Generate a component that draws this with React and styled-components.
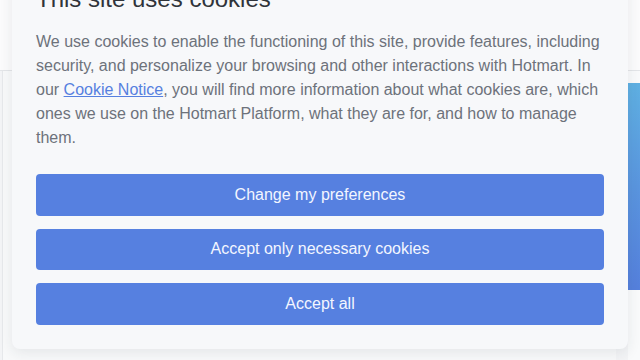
import styled, { createGlobalStyle } from "styled-components";

const Global = createGlobalStyle`
  html, body {
    margin: 0;
    padding: 0;
    width: 640px;
    height: 360px;
    overflow: hidden;
    background: #f3f4f6;
    font-family: "Liberation Sans", Arial, sans-serif;
  }
`;

const Page = styled.div`
  position: relative;
  width: 640px;
  height: 360px;
  overflow: hidden;
`;

const Header = styled.header`
  height: 70px;
  background: #fbfbfc;
  border-bottom: 1px solid #e3e5e8;
`;

const Main = styled.main`
  display: flex;
  gap: 12px;
  padding: 0 0 0 2px;
`;

const Card = styled.div`
  flex: 1;
  height: 290px;
  background: #f8f9fa;
  border-left: 1px solid #e6e8eb;
`;

const Hero = styled.div`
  width: 12px;
  padding-top: 12px;
  background: #f9fafb;
`;

const HeroImage = styled.div`
  height: 207px;
  background: linear-gradient(180deg, #5fb0e2 0%, #5a95de 50%, #5580dc 100%);
`;

const Overlay = styled.div`
  position: absolute;
  inset: 0;
  display: flex;
  justify-content: center;
  align-items: flex-start;
`;

const Modal = styled.div`
  width: 616px;
  margin-top: -41px;
  box-sizing: border-box;
  padding: 24px;
  background: #f7f8fa;
  border-radius: 8px;
  box-shadow: 0 4px 14px rgba(30, 40, 60, 0.09);
  display: flex;
  flex-direction: column;
`;

const Title = styled.h2`
  margin: 0 0 15px;
  font-size: 24px;
  line-height: 32px;
  font-weight: 400;
  color: #30343a;
`;

const Text = styled.p`
  margin: 0 0 24px;
  font-size: 16px;
  line-height: 24px;
  color: #6d727b;
`;

const Link = styled.a`
  color: #5680e0;
  text-decoration: underline;
`;

const Actions = styled.div`
  display: flex;
  flex-direction: column;
  gap: 13px;
`;

const Button = styled.button`
  height: 41.5px;
  border: 0;
  border-radius: 4px;
  background: #5680e0;
  color: #f3f6ff;
  font-family: "Liberation Sans", Arial, sans-serif;
  font-size: 16px;
  cursor: pointer;
`;

export default function App() {
  return (
    <Page>
      <Global />
      <Header />
      <Main>
        <Card />
        <Hero>
          <HeroImage />
        </Hero>
      </Main>
      <Overlay>
        <Modal>
          <Title>This site uses cookies</Title>
          <Text>
            We use cookies to enable the functioning of this site, provide
            features, including security, and personalize your browsing and
            other interactions with Hotmart. In our{" "}
            <Link href="#">Cookie Notice</Link>, you will find more information
            about what cookies are, which ones we use on the Hotmart Platform,
            what they are for, and how to manage them.
          </Text>
          <Actions>
            <Button>Change my preferences</Button>
            <Button>Accept only necessary cookies</Button>
            <Button>Accept all</Button>
          </Actions>
        </Modal>
      </Overlay>
    </Page>
  );
}
